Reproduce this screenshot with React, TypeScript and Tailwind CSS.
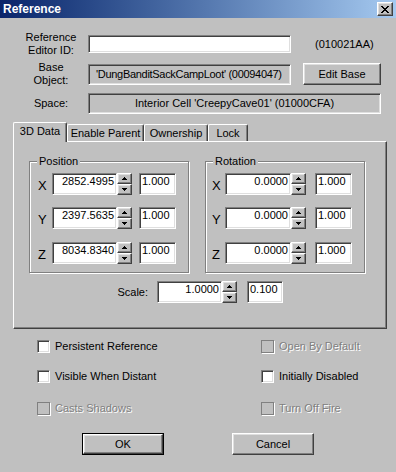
import React from 'react';

const sunken =
  'border border-t-[#808080] border-l-[#808080] border-r-white border-b-white shadow-[inset_1px_1px_0_#404040,inset_-1px_-1px_0_#dfdfdf]';
const raised =
  'border border-t-white border-l-white border-r-[#404040] border-b-[#404040] shadow-[inset_-1px_-1px_0_#808080,inset_1px_1px_0_#dfdfdf] bg-[#c0c0c0]';
const disabledText = 'text-[#808080] [text-shadow:1px_1px_0_#fff]';

function Arrow({ up }: { up?: boolean }) {
  return (
    <svg width="5" height="3" viewBox="0 0 5 3" shapeRendering="crispEdges">
      {up ? (
        <path d="M2 0h1v1h1v1h1v1H0V2h1V1h1z" fill="#000" />
      ) : (
        <path d="M0 0h5v1H4v1H3v1H2V2H1V1H0z" fill="#000" />
      )}
    </svg>
  );
}

function SpinEdit({ value, w }: { value: string; w: number }) {
  return (
    <div className="flex h-[22px]">
      <div className={`${sunken} bg-white h-full flex items-start justify-end pr-[2px] pt-[1px] leading-[13px]`} style={{ width: w }}>
        {value}
      </div>
      <div className="flex flex-col w-[15px] h-full">
        <div className={`${raised} h-[11px] flex items-center justify-center`}>
          <Arrow up />
        </div>
        <div className={`${raised} h-[11px] flex items-center justify-center`}>
          <Arrow />
        </div>
      </div>
    </div>
  );
}

function ValueBox({ value, w = 37 }: { value: string; w?: number }) {
  return (
    <div className={`${sunken} bg-white h-[22px] pl-[2px] pt-[1px] leading-[13px]`} style={{ width: w }}>
      {value}
    </div>
  );
}

function Group({ title, children, className = '' }: { title: string; children: React.ReactNode; className?: string }) {
  return (
    <div className={`relative h-[112px] w-[160px] border border-[#808080] shadow-[1px_1px_0_#fff,inset_1px_1px_0_#fff] ${className}`}>
      <span className="absolute -top-[7px] left-[7px] px-[2px] bg-[#c0c0c0] leading-[13px]">{title}</span>
      {children}
    </div>
  );
}

function AxisRow({ axis, value, pl, lw, ew, gap, mt }: { axis: string; value: string; pl: number; lw: number; ew: number; gap: number; mt: number }) {
  return (
    <div className="flex items-center h-[22px]" style={{ marginTop: mt, paddingLeft: pl }}>
      <span className="text-[13px] leading-[14px] mt-[3px]" style={{ width: lw }}>
        {axis}
      </span>
      <SpinEdit value={value} w={ew} />
      <div style={{ marginLeft: gap }}>
        <ValueBox value="1.000" />
      </div>
    </div>
  );
}

function Check({ label, disabled }: { label: string; disabled?: boolean }) {
  return (
    <div className="flex items-center h-[16px]">
      <span className={`w-[13px] h-[13px] ${disabled ? 'border border-[#808080] shadow-[1px_1px_0_#fff]' : sunken + ' bg-white'}`} />
      <span className={`ml-[5px] leading-[13px] ${disabled ? disabledText : ''}`}>{label}</span>
    </div>
  );
}

function Tab({ label, w, active }: { label: string; w: number; active?: boolean }) {
  return (
    <div
      className={`flex items-center justify-center border-t border-l border-r border-t-white border-l-white border-r-[#404040] rounded-t-[2px] shadow-[inset_-1px_0_0_#808080] bg-[#c0c0c0] leading-[13px] ${
        active ? 'h-[20px] -mb-px relative z-10 pb-[2px]' : 'h-[17px]'
      }`}
      style={{ width: w }}
    >
      {label}
    </div>
  );
}

export default function App() {
  return (
    <div className="w-[396px] h-[472px] bg-[#c0c0c0] text-black text-[11px] font-['Liberation_Sans',Arial,sans-serif] flex flex-col overflow-hidden select-none">
      {/* title bar */}
      <div className="h-[18px] flex items-center justify-between bg-linear-to-r from-[#0a246a] to-[#a6caf0] pl-[3px] pr-[3px]">
        <span className="text-white font-bold text-[12px] leading-[14px]">Reference</span>
        <div className={`${raised} w-[16px] h-[14px] flex items-center justify-center`}>
          <svg width="8" height="7" viewBox="0 0 8 7" shapeRendering="crispEdges">
            <path d="M0 0h2v1h1v1h2V1h1V0h2v1H7v1H6v1H5v1h1v1h1v1h1v1H6V6H5V5H3v1H2v1H0V6h1V5h1V4h1V3H2V2H1V1H0z" fill="#000" />
          </svg>
        </div>
      </div>

      {/* editor id */}
      <div className="flex items-center h-[26px] mt-[13px]">
        <div className="ml-[18px] w-[66px] text-center leading-[13px]">
          Reference
          <br />
          Editor ID:
        </div>
        <div className={`${sunken} bg-white ml-[4px] w-[203px] h-[18px]`} />
        <span className="ml-[24px]">(010021AA)</span>
      </div>

      {/* base object */}
      <div className="flex items-center h-[26px] mt-[4px]">
        <div className="ml-[18px] w-[66px] text-center leading-[13px]">
          Base
          <br />
          Object:
        </div>
        <div className={`${sunken} ml-[4px] w-[203px] h-[21px] flex items-center pl-[7px] whitespace-nowrap overflow-hidden tracking-[-0.3px]`}>
          'DungBanditSackCampLoot' (00094047)
        </div>
        <div className={`${raised} ml-[12px] w-[78px] h-[22px] flex items-center justify-center`}>Edit Base</div>
      </div>

      {/* space */}
      <div className="flex items-center h-[21px] mt-[6px]">
        <div className="ml-[18px] w-[66px] text-center leading-[13px]">Space:</div>
        <div className={`${sunken} ml-[4px] w-[293px] h-[21px] flex items-center justify-center whitespace-nowrap`}>
          Interior Cell 'CreepyCave01' (01000CFA)
        </div>
      </div>

      {/* tabs */}
      <div className="flex items-end h-[19px] mt-[8px] ml-[13px]">
        <Tab label="3D Data" w={54} active />
        <Tab label="Enable Parent" w={77} />
        <Tab label="Ownership" w={64} />
        <Tab label="Lock" w={40} />
      </div>
      <div className="ml-[13px] w-[374px] h-[188px] border border-t-white border-l-white border-r-[#404040] border-b-[#404040] shadow-[inset_-1px_-1px_0_#808080] flex flex-col">
        <div className="flex mt-[19px] ml-[15px]">
          <Group title="Position">
            <AxisRow axis="X" value="2852.4995" pl={8} lw={14} ew={65} gap={7} mt={11} />
            <AxisRow axis="Y" value="2397.5635" pl={8} lw={14} ew={65} gap={7} mt={12} />
            <AxisRow axis="Z" value="8034.8340" pl={8} lw={14} ew={65} gap={7} mt={13} />
          </Group>
          <Group title="Rotation" className="ml-[16px]">
            <AxisRow axis="X" value="0.0000" pl={6} lw={13} ew={66} gap={9} mt={11} />
            <AxisRow axis="Y" value="0.0000" pl={6} lw={13} ew={66} gap={9} mt={12} />
            <AxisRow axis="Z" value="0.0000" pl={6} lw={13} ew={66} gap={9} mt={13} />
          </Group>
        </div>
        <div className="flex items-center mt-[8px]">
          <span className="w-[134px] text-right">Scale:</span>
          <div className="ml-[9px]">
            <SpinEdit value="1.0000" w={65} />
          </div>
          <div className="ml-[10px]">
            <ValueBox value="0.100" w={36} />
          </div>
        </div>
      </div>

      {/* flags */}
      <div className="flex mt-[9px] ml-[37px]">
        <div className="w-[224px]">
          <Check label="Persistent Reference" />
        </div>
        <Check label="Open By Default" disabled />
      </div>
      <div className="flex mt-[14px] ml-[37px]">
        <div className="w-[224px]">
          <Check label="Visible When Distant" />
        </div>
        <Check label="Initially Disabled" />
      </div>
      <div className="flex mt-[16px] ml-[37px]">
        <div className="w-[224px]">
          <Check label="Casts Shadows" disabled />
        </div>
        <Check label="Turn Off Fire" disabled />
      </div>

      {/* buttons */}
      <div className="flex mt-[17px]">
        <div className="ml-[82px] w-[82px] h-[22px] border border-black flex">
          <div className={`${raised} flex-1 flex items-center justify-center`}>OK</div>
        </div>
        <div className={`${raised} ml-[68px] w-[82px] h-[22px] flex items-center justify-center`}>Cancel</div>
      </div>
    </div>
  );
}
